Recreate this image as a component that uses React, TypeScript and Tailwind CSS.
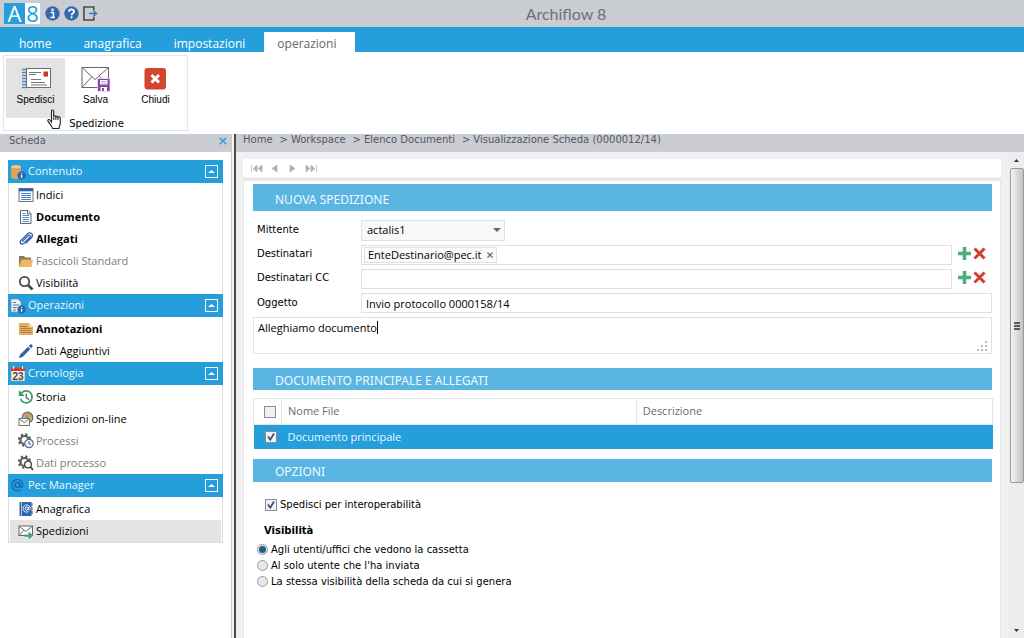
import type { ReactNode } from 'react';

const UI = "font-['Open_Sans','Noto_Sans',sans-serif]";
const WIDE = "font-['DejaVu_Sans',sans-serif]";

function Svg({ children, className = 'h-4 w-4', box = '0 0 16 16' }: { children: ReactNode; className?: string; box?: string }) {
  return (
    <svg viewBox={box} className={`shrink-0 ${className}`} fill="none" aria-hidden="true">
      {children}
    </svg>
  );
}

const InfoBadge = () => (
  <>
    <circle cx="11.6" cy="11.4" r="4.2" fill="#2f64ae" />
    <path d="M11.6 8.8v1M11.6 10.8v3" stroke="#fff" strokeWidth="1.3" />
  </>
);

const icons: Record<string, ReactNode> = {
  database: (
    <Svg>
      <path d="M1 3v10c0 1 2.2 2 5 2s5-1 5-2V3z" fill="#dfa556" />
      <ellipse cx="6" cy="3" rx="5" ry="2" fill="#efc588" />
      <path d="M1 4c1 1.6 9 1.600 10 0" stroke="#c98d3e" strokeWidth=".8" />
      <InfoBadge />
    </Svg>
  ),
  docInfo: (
    <Svg>
      <path d="M1 1h7l3 3v10H1z" fill="#eef1f6" stroke="#7b8da8" strokeWidth=".8" />
      <path d="M3 4.500h3M3 7h6M3 9.500h4M3 12h3" stroke="#5778a8" />
      <InfoBadge />
    </Svg>
  ),
  calendar: (
    <Svg>
      <rect x="1" y="2" width="14" height="13" fill="#f6f3ee" stroke="#9a8f88" strokeWidth=".7" />
      <rect x="1" y="1.500" width="14" height="3.500" fill="#c9402f" />
      <path d="M3.500 0v3M12.500 0v3" stroke="#eee" strokeWidth="1.200" />
      <text x="8" y="13.500" textAnchor="middle" fontSize="10" fontWeight="700" fill="#444" fontFamily="Liberation Sans, sans-serif">23</text>
    </Svg>
  ),
  at: (
    <Svg>
      <circle cx="7.500" cy="7" r="2.500" stroke="#1d63b4" strokeWidth="1.300" />
      <path d="M10 4.500v3.800c0 2 3 1.700 3-1.300A5.600 5.600 0 1 0 10.500 11.800" stroke="#1d63b4" strokeWidth="1.200" />
    </Svg>
  ),
  list: (
    <Svg>
      <rect x="1" y="1.500" width="14" height="13" fill="#fff" stroke="#5f7390" />
      <path d="M1 3h14" stroke="#2f5fae" strokeWidth="2.600" />
      <path d="M3 6.500h10M3 8.500h10M3 10.500h10M3 12.500h10" stroke="#4e83cf" />
    </Svg>
  ),
  doc: (
    <Svg>
      <path d="M2.500 1.500h7.500l3 3v10H2.500z" fill="#fff" stroke="#5c6b77" />
      <path d="M9.500 1.500v3.500h3.500" stroke="#5c6b77" />
      <path d="M4.500 4.500h3M4.500 6.500h6.500M4.500 8.500h6.500M4.500 10.500h6.500M4.500 12.500h6.500" stroke="#5b8cd0" />
    </Svg>
  ),
  clip: (
    <Svg>
      <path d="M4.500 10.200l5.600-5.600c1.400-1.300 3 .4 1.800 1.700l-6 6c-2.300 2.200-5-.6-2.900-2.900l6.500-6.400c3-2.900 6.700.7 3.900 3.700l-5.400 5.400" stroke="#2f62ac" strokeWidth="1.300" strokeLinecap="round" />
    </Svg>
  ),
  folder: (
    <Svg>
      <path d="M1 3h5l1.500 1.500H13V14H1z" fill="#8f7a58" />
      <path d="M3.500 6.500H15L13.500 14H1z" fill="#edb668" />
    </Svg>
  ),
  search: (
    <Svg>
      <circle cx="6.500" cy="6.500" r="4.700" stroke="#4a4a4a" strokeWidth="1.800" />
      <path d="M10 10l4.500 4.500" stroke="#4a4a4a" strokeWidth="2.600" />
    </Svg>
  ),
  note: (
    <Svg>
      <path d="M1 2h10l4 4v8H1z" fill="#e3b063" />
      <path d="M11 2v4h4" fill="#f6dcae" />
      <path d="M2.500 5.500h7M2.500 7.500h11M2.500 9.500h11M2.500 11.500h11" stroke="#a97b36" strokeWidth=".9" />
    </Svg>
  ),
  pencil: (
    <Svg>
      <path d="M2.200 11.500l7.800-7.800 2.400 2.400-7.800 7.800-3.800 1.200z" fill="#2f64ae" />
      <path d="M10.800 2.900l1.400-1.400c1.200-.8 3 1 2.300 2.300l-1.300 1.500z" fill="#2f64ae" />
    </Svg>
  ),
  history: (
    <Svg>
      <path d="M3.500 4A6 6 0 1 1 2.500 10" stroke="#3d9f6c" strokeWidth="1.800" />
      <path d="M.8 1v6h6z" fill="#3d9f6c" />
      <path d="M8.300 4.500v4l2.700 2.200" stroke="#4c5a55" strokeWidth="1.200" />
    </Svg>
  ),
  globeMail: (
    <Svg>
      <circle cx="9.500" cy="6.500" r="5.300" fill="#eab04f" stroke="#3f70aa" strokeWidth="1.200" />
      <path d="M5 5c3-4 7-3 8.500 1" stroke="#d98a3a" strokeWidth="1.400" />
      <circle cx="9" cy="6" r="2" fill="#6f9ad0" />
      <rect x="1" y="7.500" width="10.500" height="7" fill="#f6f6f2" stroke="#777" />
      <path d="M1.500 8l4.800 3.500L11 8" stroke="#777" />
    </Svg>
  ),
  gearClock: (
    <Svg>
      <circle cx="6.500" cy="7" r="4" stroke="#5b5b5b" strokeWidth="2.200" />
      <circle cx="6.500" cy="7" r="5.700" stroke="#5b5b5b" strokeWidth="2" strokeDasharray="2.240 2.240" />
      <circle cx="11" cy="10.500" r="4.200" fill="#f4f6f9" stroke="#5c6c83" strokeWidth="1.200" />
      <path d="M11 8v2.700l2 .8" stroke="#3f69a6" strokeWidth="1.100" />
    </Svg>
  ),
  gearSearch: (
    <Svg>
      <circle cx="6.500" cy="7" r="4" stroke="#5b5b5b" strokeWidth="2.200" />
      <circle cx="6.500" cy="7" r="5.700" stroke="#5b5b5b" strokeWidth="2" strokeDasharray="2.240 2.240" />
      <circle cx="10" cy="9.500" r="3.400" fill="#f4f4f4" stroke="#444" strokeWidth="1.300" />
      <path d="M12.500 12l2.500 2.800" stroke="#444" strokeWidth="1.800" />
    </Svg>
  ),
  book: (
    <Svg>
      <path d="M13 2h2v3h-2z" fill="#8fb9e2" />
      <path d="M13 6h2v3h-2z" fill="#e0a74f" />
      <path d="M13 10h2v3h-2z" fill="#5fae84" />
      <rect x="1.500" y="1" width="12" height="14" fill="#2f66b0" />
      <path d="M3.500 1v14" stroke="#9fbfe6" />
      <circle cx="8.700" cy="7.500" r="1.600" stroke="#fff" />
      <path d="M10.300 6v2.200c.2 1.300 1.900.8 1.900-.7a3.600 3.600 0 1 0-1.700 3.100" stroke="#fff" strokeWidth=".9" />
    </Svg>
  ),
  mailSend: (
    <Svg>
      <rect x="1" y="3" width="13.500" height="9.500" fill="#fff" stroke="#666" />
      <path d="M1 3l6.700 5.500L14.500 3M1 12.500l4.800-5.300" stroke="#666" />
      <path d="M6.500 11.500h4V8.500L15.500 12.500l-5 4v-2.800h-4z" fill="#45a577" />
    </Svg>
  ),
};

type Item = { label: string; icon: string; bold?: boolean; muted?: boolean; active?: boolean };
const groups: { title: string; icon: string; items: Item[] }[] = [
  {
    title: 'Contenuto',
    icon: 'database',
    items: [
      { label: 'Indici', icon: 'list' },
      { label: 'Documento', icon: 'doc', bold: true },
      { label: 'Allegati', icon: 'clip', bold: true },
      { label: 'Fascicoli Standard', icon: 'folder', muted: true },
      { label: 'Visibilità', icon: 'search' },
    ],
  },
  {
    title: 'Operazioni',
    icon: 'docInfo',
    items: [
      { label: 'Annotazioni', icon: 'note', bold: true },
      { label: 'Dati Aggiuntivi', icon: 'pencil' },
    ],
  },
  {
    title: 'Cronologia',
    icon: 'calendar',
    items: [
      { label: 'Storia', icon: 'history' },
      { label: 'Spedizioni on-line', icon: 'globeMail' },
      { label: 'Processi', icon: 'gearClock', muted: true },
      { label: 'Dati processo', icon: 'gearSearch', muted: true },
    ],
  },
  {
    title: 'Pec Manager',
    icon: 'at',
    items: [
      { label: 'Anagrafica', icon: 'book' },
      { label: 'Spedizioni', icon: 'mailSend', active: true },
    ],
  },
];

function TopBar() {
  return (
    <header className="flex h-[27px] items-center bg-[#cacdd2] pl-1">
      <div className="flex items-center gap-1">
        <div className="mr-px flex h-[21px] font-['Open_Sans',sans-serif] text-[22px] leading-[21px]">
          <span className="w-[21px] bg-[#259fdb] text-center text-white">A</span>
          <span className="w-[15px] bg-white text-center text-[#259fdb]">8</span>
        </div>
        <button aria-label="Informazioni" className="h-[15px] w-[15px]">
          <Svg className="h-[15px] w-[15px]">
            <circle cx="8" cy="8" r="7.700" fill="#3468ad" />
            <path d="M6 7h3v4.500M5.800 12.200h4.600" stroke="#fff" strokeWidth="1.700" />
            <circle cx="8" cy="4" r="1.300" fill="#fff" />
          </Svg>
        </button>
        <button aria-label="Guida" className="h-[15px] w-[15px]">
          <Svg className="h-[15px] w-[15px]">
            <circle cx="8" cy="8" r="7.700" fill="#3468ad" />
            <path d="M5.300 6.200c0-3.400 5.400-3.300 5.400-.3 0 1.900-2.600 1.700-2.600 4" stroke="#fff" strokeWidth="1.900" />
            <circle cx="8.100" cy="12.100" r="1.200" fill="#fff" />
          </Svg>
        </button>
        <button aria-label="Esci" className="h-[15px] w-[15px]">
          <Svg className="h-[15px] w-[15px]">
            <path d="M11.500 4.500V1H1v14h10.500v-3.500" stroke="#4a4a4a" strokeWidth="1.700" />
            <path d="M6.500 8h7M11 5l3.500 3-3.500 3" stroke="#3b74b4" strokeWidth="1.500" />
          </Svg>
        </button>
      </div>
      <h1 className="flex-1 pl-2.5 text-center font-['Lato',sans-serif] text-[16px] leading-5 text-[#6d7074]">Archiflow 8</h1>
    </header>
  );
}

function Tabs() {
  const tabs = ['home', 'anagrafica', 'impostazioni', 'operazioni'];
  return (
    <nav className={`flex h-[25px] items-end bg-[#259fdb] pl-1.5 text-[12px] ${UI}`}>
      {tabs.map((t) => (
        <a
          key={t}
          href={`#${t}`}
          className={`flex h-5 items-center pt-1 pr-[19px] pl-[13px] ${t === 'operazioni' ? 'bg-white text-[#666]' : 'text-white'}`}
        >
          {t}
        </a>
      ))}
    </nav>
  );
}

function RibbonButton({ label, active, children }: { label: string; active?: boolean; children: ReactNode }) {
  return (
    <button className={`flex h-[60px] w-[59px] flex-col items-center pt-2 ${active ? 'bg-[#e3e3e3]' : ''}`}>
      {children}
      <span className="mt-0.5 leading-3">{label}</span>
    </button>
  );
}

function Ribbon() {
  return (
    <section className="flex h-[82px] bg-white pt-[3px] pl-[3px]">
      <div className="relative h-[76px] border border-[#e3e5e7] p-0.5 font-['Liberation_Sans',sans-serif] text-[10px] text-black">
        <div className="flex gap-px">
          <RibbonButton label="Spedisci" active>
            <Svg className="h-[26px] w-[30px]" box="0 0 30 26">
              <rect x="5.500" y="2.500" width="24" height="19" fill="#fff" stroke="#686d73" />
              <path d="M1 3.500h4M1 6.500h4M1 9.500h4M1 12.500h4M1 15.500h4M1 18.500h4M1 21.500h4" stroke="#5587bd" strokeWidth="1.300" />
              <path d="M8 6.500h12M8 8.500h7M10 13.500h10M10 16.500h14M10 19h16" stroke="#777" strokeWidth="1.200" />
              <rect x="22.500" y="5.500" width="4.500" height="5" fill="#c53b28" />
            </Svg>
          </RibbonButton>
          <RibbonButton label="Salva">
            <Svg className="h-[26px] w-[30px]" box="0 0 30 26">
              <rect x="1" y="1.500" width="26.500" height="20" fill="#fff" stroke="#666" />
              <path d="M1 1.500l13 12 13.500-12M1 21.500l10-11M27.500 21.500l-9-11" stroke="#666" />
              <path d="M16.500 12.500h12.500v13h-12.500z" fill="#8646a8" stroke="#fff" strokeWidth=".6" />
              <rect x="19" y="14" width="7.500" height="4.500" fill="#fff" />
              <path d="M20 15.500h5.500M20 17.200h5.500" stroke="#b79acb" strokeWidth=".8" />
              <path d="M19.500 21h6.500v4h-6.500z" fill="#fff" />
              <path d="M21 22h2v3h-2z" fill="#8646a8" />
            </Svg>
          </RibbonButton>
          <RibbonButton label="Chiudi">
            <Svg className="h-[26px] w-[30px]" box="0 0 30 26">
              <rect x="3.500" y="2" width="21.500" height="21.500" rx="3" fill="#d34530" />
              <path d="M10.500 9l7.500 7.500M18 9l-7.500 7.500" stroke="#fff" strokeWidth="3" />
            </Svg>
          </RibbonButton>
        </div>
        <div className={`pl-0.5 text-center text-[10px] leading-3 ${WIDE}`}>Spedizione</div>
        <Svg className="absolute top-[53px] left-[42px] h-[21px] w-[17px]" box="0 0 17 21">
          <path
            d="M5.500 13V2.200c0-1.700 2.200-1.700 2.200 0V7.500c.3-1 2-.9 2.200.3.400-1 1.900-.7 2.100.5.500-.8 2.200-.5 2.300.8V14c0 2-1.300 3-1.300 5.500H6.500C6 17 3.800 15 2.200 12.600 1 11 2.700 9.800 4 11z"
            fill="#fff"
            stroke="#222"
            strokeWidth="1.100"
          />
          <path d="M7.700 7.500V11M9.900 8v3M12 8.500V11" stroke="#222" />
        </Svg>
      </div>
    </section>
  );
}

function Sidebar() {
  return (
    <aside className="w-[231px] shrink-0 bg-white">
      <div className={`flex h-[18px] items-center justify-between bg-[#cacdd2] pr-1 pb-1 pl-[9px] text-[10px] leading-3 text-[#55585c] ${WIDE}`}>
        <span>Scheda</span>
        <button aria-label="Chiudi scheda">
          <Svg className="h-2 w-2" box="0 0 8 8">
            <path d="M.7.7l6.600 6.600M7.300.7L.7 7.300" stroke="#2f9bd5" strokeWidth="1.400" />
          </Svg>
        </button>
      </div>
      <div className={`mt-2 mr-2 ml-2 border-x border-b border-[#dedede] text-[11px] ${UI}`}>
        {groups.map((g) => (
          <section key={g.title}>
            <h2 className="-mx-px flex h-[23px] items-center gap-0.5 bg-[#259fdb] pr-[5px] pl-0.5 text-white">
              {icons[g.icon]}
              <span className="flex-1 text-[#e9f8ff]">{g.title}</span>
              <button aria-label={`Comprimi ${g.title}`} className="flex h-[13px] w-[13px] items-center justify-center border border-white">
                <Svg className="h-[3px] w-[7px]" box="0 0 7 3">
                  <path d="M0 3L3.500 0 7 3z" fill="#fff" />
                </Svg>
              </button>
            </h2>
            <ul className="px-px pt-px">
              {g.items.map((i) => (
                <li key={i.label}>
                  <a
                    href="#scheda"
                    className={`flex h-[22px] items-center gap-0.5 pl-2 ${i.active ? 'bg-[#e4e4e4]' : ''} ${i.bold ? 'font-bold' : ''} ${i.muted ? 'text-[#7b7b7b]' : 'text-black'}`}
                  >
                    {icons[i.icon]}
                    {i.label}
                  </a>
                </li>
              ))}
            </ul>
          </section>
        ))}
      </div>
    </aside>
  );
}

function Band({ children, className }: { children: ReactNode; className: string }) {
  return (
    <h2 className={`flex items-center bg-[#5bb5e3] pl-[22px] font-['Noto_Sans',sans-serif] text-[12px] text-[#eefaff] ${className}`}>
      {children}
    </h2>
  );
}

function Check({ id, label, checked }: { id: string; label?: string; checked?: boolean }) {
  return (
    <span className="grid h-3 w-3 shrink-0">
      <input
        id={id}
        type="checkbox"
        defaultChecked={checked}
        aria-label={label}
        className="peer col-start-1 row-start-1 h-3 w-3 appearance-none border border-[#8a8d91] bg-[#f0f1f4]"
      />
      <span className="pointer-events-none invisible col-start-1 row-start-1 peer-checked:visible">
        <Svg className="h-3 w-3" box="0 0 12 12">
          <path d="M3 5.500l2.300 3.300L9 2.500" stroke="#3c4a86" strokeWidth="1.700" />
        </Svg>
      </span>
    </span>
  );
}

function AddRemove() {
  return (
    <div className="flex w-10 shrink-0 items-center gap-0.5 pb-1 pl-1.5">
      <button type="button" aria-label="Aggiungi">
        <Svg className="h-[13px] w-[13px]" box="0 0 13 13">
          <path d="M6.500 0v13M0 6.500h13" stroke="#4fae82" strokeWidth="3.600" />
        </Svg>
      </button>
      <button type="button" aria-label="Rimuovi">
        <Svg className="h-[13px] w-[13px]" box="0 0 13 13">
          <path d="M1.500 1.500l10 10M11.500 1.500l-10 10" stroke="#d1402b" strokeWidth="3" />
        </Svg>
      </button>
    </div>
  );
}

const labelCls = "w-[108px] shrink-0 pl-1 font-['DejaVu_Sans',sans-serif] text-[10px] leading-[18px]";
const fieldCls = 'h-5 min-w-0 flex-1 border border-[#dfe0e1] bg-white px-1';

function Form() {
  return (
    <form className="flex flex-col gap-1 pt-2 text-[11px] text-black">
      <div className="flex h-[22px] items-center">
        <label htmlFor="mittente" className={labelCls}>Mittente</label>
        <div className="relative w-36">
          <select id="mittente" className="h-[21px] w-full appearance-none border border-[#e0e0e0] bg-[#f8f8f8] px-[5px]">
            <option>actalis1</option>
          </select>
          <Svg className="pointer-events-none absolute top-2 right-1 h-1 w-2" box="0 0 8 4">
            <path d="M0 0h8L4 4z" fill="#666" />
          </Svg>
        </div>
      </div>
      <div className="flex">
        <label htmlFor="dest" className={labelCls}>Destinatari</label>
        <div className="flex h-5 min-w-0 flex-1 items-center border border-[#dfe0e1] px-0.5">
          <span className="flex h-4 items-center gap-1.5 border border-[#dfe0e1] bg-[#fafafa] px-[3px]">
            EnteDestinario@pec.it
            <button type="button" aria-label="Rimuovi EnteDestinario@pec.it">
              <Svg className="h-1.5 w-1.5" box="0 0 6 6">
                <path d="M.5.5l5 5M5.500.5l-5 5" stroke="#666" strokeWidth="1.200" />
              </Svg>
            </button>
          </span>
          <input id="dest" type="text" className="h-4 min-w-0 flex-1" />
        </div>
        <AddRemove />
      </div>
      <div className="flex">
        <label htmlFor="cc" className={labelCls}>Destinatari CC</label>
        <input id="cc" type="text" className={fieldCls} />
        <AddRemove />
      </div>
      <div className="flex items-center">
        <label htmlFor="oggetto" className={labelCls}>Oggetto</label>
        <input id="oggetto" type="text" defaultValue="Invio protocollo 0000158/14" className={fieldCls} />
      </div>
      <div className="relative flex">
        <textarea
          aria-label="Testo del messaggio"
          defaultValue="Alleghiamo documento"
          className="h-[37px] w-full resize-none border border-[#dfe0e1] px-1 py-0.5 leading-4"
        />
        <span className="absolute top-1 left-[124px] h-[13px] w-px bg-black" />
        <Svg className="absolute right-1 bottom-0.5 h-[11px] w-[11px]" box="0 0 11 11">
          <path d="M8 1h2M4 5h2M8 5h2M0 9h2M4 9h2M8 9h2" stroke="#b5b5b5" strokeWidth="2" />
        </Svg>
      </div>
    </form>
  );
}

function Attachments() {
  return (
    <table className="mt-2 -mr-px w-[calc(100%+1px)] table-fixed border-collapse text-left text-[11px]">
      <colgroup>
        <col className="w-7" />
        <col className="w-[48%]" />
        <col />
      </colgroup>
      <thead>
        <tr className="h-[26px] text-[#6b6b6b]">
          <th className="border border-[#e6e6e6] pl-2.5">
            <Check id="all" label="Seleziona tutti" />
          </th>
          <th className="border border-[#e6e6e6] px-1.5 font-normal">Nome File</th>
          <th className="border border-[#e6e6e6] px-1.5 font-normal">Descrizione</th>
        </tr>
      </thead>
      <tbody>
        <tr className="h-6 bg-[#259fdb] text-[#e9f8ff]">
          <td className="pl-[11px]">
            <Check id="row" label="Documento principale" checked />
          </td>
          <td className="px-1.5">Documento principale</td>
          <td />
        </tr>
      </tbody>
    </table>
  );
}

function Options() {
  const radios = ["Agli utenti/uffici che vedono la cassetta", "Al solo utente che l'ha inviata", 'La stessa visibilità della scheda da cui si genera'];
  return (
    <div className={`pt-[15px] text-[10px] text-black ${WIDE}`}>
      <div className="flex h-4 items-center gap-[3px] pl-3">
        <Check id="interop" checked />
        <label htmlFor="interop">Spedisci per interoperabilità</label>
      </div>
      <fieldset className="mt-[10px]">
        <legend className="pl-[11px] leading-4 font-bold">Visibilità</legend>
        <div className="pt-[3px]">
          {radios.map((r, i) => (
            <div key={r} className="flex h-4 items-center gap-[3px] pl-1">
              <span className="grid h-[11px] w-[11px] place-items-center">
                <input
                  type="radio"
                  name="vis"
                  id={`vis${i}`}
                  defaultChecked={i === 0}
                  className="peer col-start-1 row-start-1 h-[11px] w-[11px] appearance-none rounded-full border border-[#9a9da1] bg-[#e6e7e9]"
                />
                <span className="pointer-events-none invisible col-start-1 row-start-1 h-[7px] w-[7px] rounded-full bg-[#1f5f87] peer-checked:visible" />
              </span>
              <label htmlFor={`vis${i}`}>{r}</label>
            </div>
          ))}
        </div>
      </fieldset>
    </div>
  );
}

function Pager() {
  const items = [
    { label: 'Primo', d: 'M.500 0v7M6 0v7L2 3.500zM11 0v7L7 3.500z' },
    { label: 'Precedente', d: 'M8 0v7L3 3.500z' },
    { label: 'Successivo', d: 'M3 0v7l5-3.500z' },
    { label: 'Ultimo', d: 'M11.500 0v7M1 0v7l4-3.500zM6 0v7l4-3.500z' },
  ];
  return (
    <div className="flex h-[18px] items-center gap-1.5 bg-white pl-2">
      {items.map((p) => (
        <button key={p.label} aria-label={p.label} className="w-3">
          <Svg className="h-[7px] w-3" box="0 0 12 7">
            <path d={p.d} fill="#b3b3b3" stroke="#b3b3b3" strokeWidth=".7" />
          </Svg>
        </button>
      ))}
    </div>
  );
}

function Scrollbar() {
  return (
    <div className="flex w-[15px] shrink-0 flex-col items-center bg-[#ededed]" aria-hidden="true">
      <div className="flex h-4 items-center">
        <Svg className="h-[3px] w-[5px]" box="0 0 5 3">
          <path d="M0 3L2.500 0 5 3z" fill="#333" />
        </Svg>
      </div>
      <div className="flex h-[315px] w-[14px] flex-col items-center justify-center gap-px rounded-xs border border-[#9a9a9c] bg-linear-to-r from-[#f4f4f5] to-[#c2c3c8]">
        <span className="h-0.5 w-1.5 bg-[#5b5b5b]" />
        <span className="h-0.5 w-1.5 bg-[#5b5b5b]" />
        <span className="h-0.5 w-1.5 bg-[#5b5b5b]" />
      </div>
      <div className="flex flex-1 items-end pb-1.5">
        <Svg className="h-[3px] w-[5px]" box="0 0 5 3">
          <path d="M0 0L2.500 3 5 0z" fill="#333" />
        </Svg>
      </div>
    </div>
  );
}

export default function App() {
  const crumbs = ['Home', 'Workspace', 'Elenco Documenti', 'Visualizzazione Scheda (0000012/14)'];
  return (
    <div className={`flex min-h-screen flex-col bg-white ${UI}`}>
      <TopBar />
      <Tabs />
      <Ribbon />
      <div className="flex flex-1">
        <Sidebar />
        <div className="w-[3px] shrink-0 border-l border-[#c9c9c9] bg-[#f3f3f3]" />
        <main className="flex min-w-0 flex-1 flex-col border-l-2 border-[#4a4a4c] bg-[#f0f0f0]">
          <nav className={`flex h-[18px] gap-[7px] bg-[#cacdd2] pl-[7px] text-[10px] leading-3 text-[#55585c] ${WIDE}`}>
            {crumbs.map((c, i) => (
              <span key={c} className="flex gap-[3px]">
                {i > 0 && <span>&gt;</span>}
                <a href="#nav">{c}</a>
              </span>
            ))}
          </nav>
          <div className="flex flex-1">
            <div className="flex min-w-0 flex-1 flex-col pt-[7px] pr-2 pl-[7px]">
              <Pager />
              <div className="mt-px flex-1 border-x border-t-[3px] border-[#e6e6e6] bg-white pt-[3px] pr-2 pl-[9px]">
                <Band className="h-[27px] pt-1">NUOVA SPEDIZIONE</Band>
                <Form />
                <Band className="mt-[14px] h-[22px] pt-1">DOCUMENTO PRINCIPALE E ALLEGATI</Band>
                <Attachments />
                <Band className="mt-2.5 h-[23px] pt-1">OPZIONI</Band>
                <Options />
              </div>
            </div>
            <Scrollbar />
          </div>
        </main>
      </div>
    </div>
  );
}
